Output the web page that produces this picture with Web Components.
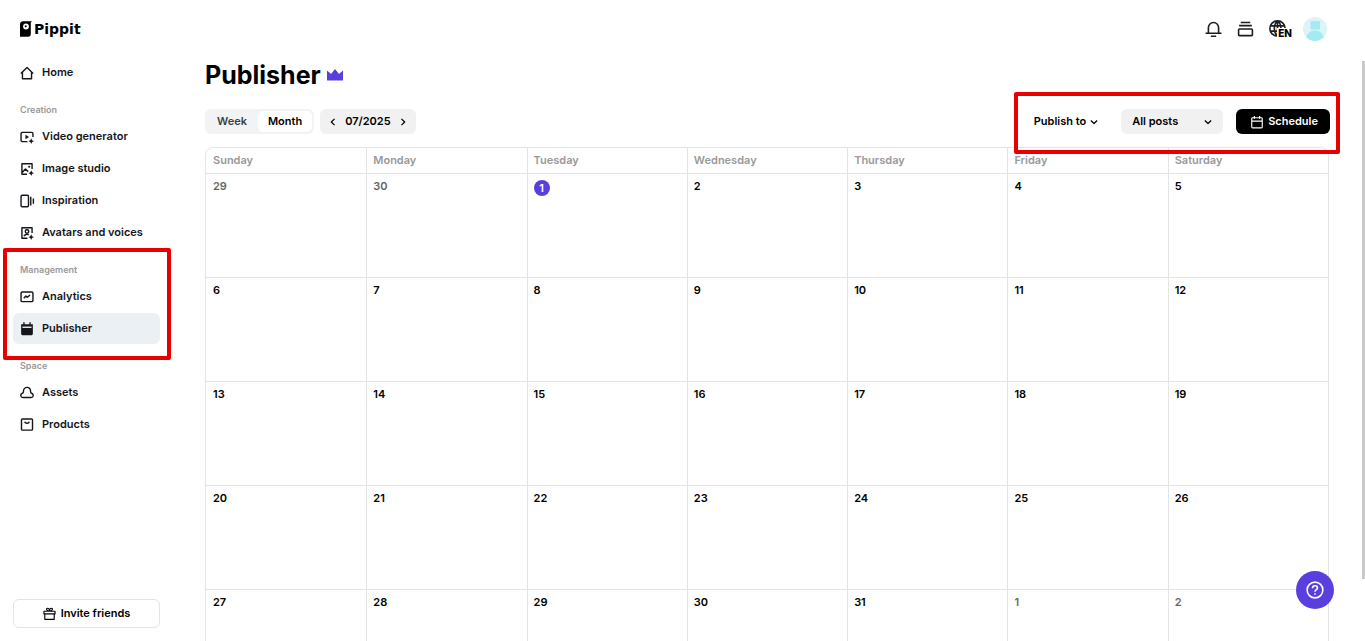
<!DOCTYPE html>
<html lang="en">
<head>
<meta charset="UTF-8">
<meta name="viewport" content="width=device-width, initial-scale=1.0">
<title>Pippit - Publisher</title>
<style>
    :root {
        --text: #14161a;
        --muted: #999;
        --line: #e4e4e4;
        --soft: #f1f1f1;
        --purple: #5b3fde;
        --red: #e60000;
    }
    html, body {
        height: 100%;
        margin: 0;
        overflow: hidden;
    }
    body {
        background: #fff;
        color: var(--text);
        font: 600 11px/16px Inter, "Liberation Sans", sans-serif;
    }
</style>
</head>
<body>
<pippit-app></pippit-app>

<script>
const icons = {
    home: '<path d="M1 8.500 8 1.800l7 6.700M2.800 7v7.500h10.400V7"/>',
    video: '<path d="M8.500 13.300H2.700a1.500 1.500 0 0 1-1.500-1.500V4.200a1.500 1.500 0 0 1 1.500-1.500h10.600a1.500 1.500 0 0 1 1.500 1.500V8"/><path class="fill" d="m6.200 5.500 4.200 2.500-4.200 2.500zM12.800 9.500l1 2.300 2.200 1-2.200 1-1 2.200-1-2.200-2.200-1 2.200-1z"/>',
    image: '<path d="M8 14H2.200V2h11.600v6M2.500 12l3.700-4 3.200 3"/><circle class="fill" cx="10.500" cy="5.500" r="1.200"/><path class="fill" d="m12.800 9.500 1 2.300 2.200 1-2.200 1-1 2.200-1-2.200-2.200-1 2.200-1z"/>',
    inspiration: '<rect x="1.200" y="1.500" width="8.500" height="13" rx="1.300"/><path d="M12.300 3v10M15.300 5v6"/>',
    avatar: '<path d="M8.500 14H2.200V2h11.600v6"/><circle cx="8" cy="6.300" r="2"/><path d="M4.500 11.700c1-2.300 4-2.700 5.500-1.400"/><path class="fill" d="m12.800 9.500 1 2.300 2.200 1-2.200 1-1 2.200-1-2.200-2.200-1 2.200-1z"/>',
    analytics: '<rect x="1.200" y="2.300" width="13.600" height="11" rx="1.300"/><path d="m4.300 9.500 2.400-2.700 1.500 1.600 3.300-2.600"/>',
    calendarFill: '<path class="fill" d="M1.300 2.500h13.400v11a1.500 1.500 0 0 1-1.500 1.500H2.800a1.500 1.500 0 0 1-1.500-1.500z"/><path d="M4.500 .3V3M11.500 .3V3"/><path stroke="#ebf0f4" d="M2.800 6h10.400"/>',
    calendar: '<rect x="2" y="3.200" width="12" height="11.500" rx="1"/><path d="M2 7h12M5 1.200v3M11 1.200v3"/>',
    assets: '<path d="M3.300 13.200c-3 0-3.200-4-.7-4.900 1.100-.4 1.300-.8 1.300-1.800 0-6.500 8.200-6.500 8.200 0 0 1 .2 1.400 1.300 1.800 2.500.9 2.300 4.900-.7 4.900z"/>',
    products: '<rect x="1.700" y="1.200" width="12.600" height="12.600" rx="1"/><path d="M5.300 4.300c.8 2.200 4.600 2.200 5.400 0"/>',
    gift: '<path d="M2.200 8.500v6.700h11.600V8.500M1.200 5.200h13.600v3.300H1.200zM8 5.200C4 5 3.500 1.500 5.700 1.500 7.200 1.500 8 3.500 8 5.200c0-1.700.8-3.700 2.300-3.700C12.500 1.500 12 5 8 5.200"/>',
    bell: '<path d="M3.200 12.500V7.200a4.800 4.800 0 0 1 9.600 0v5.300M.5 12.500h15M5.500 15.300h5"/>',
    stack: '<path d="M3.500 2.300h9M2 5.300h12"/><rect x="1.500" y="8.500" width="13" height="6.200" rx=".8"/>',
    globe: '<path d="M8 15.200A7.200 7.200 0 1 1 15.200 8M8 15.200C4 11.500 4 4.500 8 .8c2.200 1.800 3.300 4.200 3.300 7.200M1.300 5.500h13.400M1.300 10.500H8M8 .8v14.400"/>',
    down: '<path d="m3 5.500 5 5 5-5"/>',
    left: '<path d="M10.500 3 5.300 8l5.200 5"/>',
    right: '<path d="M5.500 3l5.200 5-5.200 5"/>',
    help: '<circle cx="8" cy="8" r="7"/><path d="M5.800 6.400c0-3 4.400-2.800 4.400-.2 0 1.600-2.200 1.500-2.200 3.300M8 10.800v1.400"/>',
    crown: '<path class="fill" stroke="none" d="M0 3.500l4 3.500L8 2l4 5 4-3.500V13.500H0z"/>'
};

class PippitIcon extends HTMLElement {

    constructor() {
        super()
        this.shadow = this.attachShadow({ mode: 'open' })
    }

    connectedCallback() {
        this.shadow.innerHTML =
      /*html*/`
        <style>
            :host {
                display: block;
                flex: none;
                width: var(--icon-size, 16px);
                height: var(--icon-size, 16px);
            }
            svg {
                display: block;
                width: 100%;
                height: 100%;
                overflow: visible;
                fill: none;
                stroke: currentColor;
                stroke-width: var(--icon-stroke, 1.6);
                stroke-linejoin: round;
            }
            .fill {
                fill: currentColor;
                stroke: none;
            }
        </style>
        <svg viewBox="0 0 16 16" aria-hidden="true">${icons[this.getAttribute('name')]}</svg>
      `
    }
}

class PippitHeader extends HTMLElement {

    constructor() {
        super()
        this.shadow = this.attachShadow({ mode: 'open' })
    }

    connectedCallback() {
        this.shadow.innerHTML =
      /*html*/`
        <style>
            :host {
                display: flex;
                justify-content: space-between;
                align-items: center;
                height: 57px;
                padding: 0 38px 0 20px;
            }
            .logo {
                display: flex;
                align-items: center;
                gap: 2px;
                color: #000;
                font: 700 14px/20px "DejaVu Sans", sans-serif;
                text-decoration: none;
            }
            .logo svg {
                width: 12px;
                height: 16px;
            }
            .tools {
                display: flex;
                align-items: center;
                gap: 15px;
            }
            button {
                display: flex;
                padding: 0;
                border: none;
                background: none;
                color: #1c1e24;
                --icon-size: 17px;
                --icon-stroke: 1.5;
            }
            .language {
                position: relative;
                width: 19px;
            }
            .language span {
                position: absolute;
                right: -4px;
                bottom: -1px;
                padding-left: 1px;
                background: #fff;
                color: #000;
                font: 800 10px/10px Inter, sans-serif;
            }
            .avatar svg {
                width: 24px;
                height: 24px;
            }
        </style>
        <a class="logo" href="#">
            <svg viewBox="0 0 12 16" aria-hidden="true">
                <path d="M3 .3h9l-1.200 1.200V13a2.700 2.700 0 0 1-2.700 2.700H0V3.500A3.200 3.200 0 0 1 3 .3z"/>
                <circle cx="6" cy="5.500" r="2.900" fill="#fff"/>
                <circle cx="5.700" cy="5.300" r="1.100"/>
            </svg>
            <span>Pippit</span>
        </a>
        <div class="tools">
            <button aria-label="Notifications"><pippit-icon name="bell"></pippit-icon></button>
            <button aria-label="Tasks"><pippit-icon name="stack"></pippit-icon></button>
            <button class="language" aria-label="Language"><pippit-icon name="globe"></pippit-icon><span>EN</span></button>
            <button class="avatar" aria-label="Account">
                <svg viewBox="0 0 24 24" aria-hidden="true">
                    <circle cx="12" cy="12" r="12" fill="#daf4f7"/>
                    <rect x="7.500" y="4" width="9.500" height="8.500" rx="1" fill="#a3eaf1"/>
                    <path d="M3.300 20.300C4.500 16 8 13.500 12 13.500s7.500 2.500 8.700 6.800A12 12 0 0 1 3.300 20.300z" fill="#a3eaf1"/>
                </svg>
            </button>
        </div>
      `
    }
}

class NavGroup extends HTMLElement {

    constructor() {
        super()
        this.shadow = this.attachShadow({ mode: 'open' })
    }

    connectedCallback() {
        const label = this.getAttribute('label')
        this.shadow.innerHTML =
      /*html*/`
        <style>
            :host {
                display: block;
                position: relative;
            }
            h2 {
                margin: 0;
                padding: 13px 7px 3px;
                color: var(--muted);
                font: 600 9px/16px Inter, sans-serif;
            }
            :host([marked])::after {
                content: "";
                position: absolute;
                inset: -1px -11px -15px -10px;
                border: 4px solid var(--red);
                border-radius: 2px;
                pointer-events: none;
            }
        </style>
        ${label ? `<h2>${label}</h2>` : ''}
        <slot></slot>
      `
    }
}

class NavItem extends HTMLElement {

    constructor() {
        super()
        this.shadow = this.attachShadow({ mode: 'open' })
    }

    connectedCallback() {
        this.shadow.innerHTML =
      /*html*/`
        <style>
            :host {
                display: block;
                padding-bottom: 1px;
            }
            a {
                display: flex;
                align-items: center;
                gap: 8px;
                height: 31px;
                padding: 0 7px;
                border-radius: 6px;
                color: inherit;
                text-decoration: none;
                --icon-size: 14px;
            }
            span {
                padding-bottom: 2px;
            }
            :host([active]) a {
                background: #ebf0f4;
            }
        </style>
        <a href="#"><pippit-icon name="${this.getAttribute('icon')}"></pippit-icon><span><slot></slot></span></a>
      `
    }
}

class PippitSidebar extends HTMLElement {

    constructor() {
        super()
        this.shadow = this.attachShadow({ mode: 'open' })
    }

    connectedCallback() {
        this.shadow.innerHTML =
      /*html*/`
        <style>
            :host {
                display: flex;
                flex-direction: column;
                justify-content: space-between;
                box-sizing: border-box;
                padding: 0 13px;
            }
            .invite {
                display: flex;
                justify-content: center;
                align-items: center;
                gap: 5px;
                width: 100%;
                height: 29px;
                margin-bottom: 13px;
                border: 1px solid var(--line);
                border-radius: 6px;
                background: #fff;
                color: #000;
                font: inherit;
                --icon-size: 13px;
                --icon-stroke: 1.4;
            }
            .invite span {
                padding-bottom: 2px;
            }
        </style>
        <nav>
            <nav-group>
                <nav-item icon="home">Home</nav-item>
            </nav-group>
            <nav-group label="Creation">
                <nav-item icon="video">Video generator</nav-item>
                <nav-item icon="image">Image studio</nav-item>
                <nav-item icon="inspiration">Inspiration</nav-item>
                <nav-item icon="avatar">Avatars and voices</nav-item>
            </nav-group>
            <nav-group label="Management" marked>
                <nav-item icon="analytics">Analytics</nav-item>
                <nav-item icon="calendarFill" active>Publisher</nav-item>
            </nav-group>
            <nav-group label="Space">
                <nav-item icon="assets">Assets</nav-item>
                <nav-item icon="products">Products</nav-item>
            </nav-group>
        </nav>
        <button class="invite"><pippit-icon name="gift"></pippit-icon><span>Invite friends</span></button>
      `
    }
}

class PublisherToolbar extends HTMLElement {

    constructor() {
        super()
        this.shadow = this.attachShadow({ mode: 'open' })
    }

    connectedCallback() {
        this.shadow.innerHTML =
      /*html*/`
        <style>
            :host {
                display: flex;
                justify-content: space-between;
                color: #000;
            }
            div {
                display: flex;
                align-items: center;
            }
            button, select {
                border: none;
                background: none;
                color: inherit;
                font: inherit;
            }
            button {
                display: flex;
                align-items: center;
                padding: 0;
            }
            span {
                padding-bottom: 2px;
            }
            .view {
                gap: 6px;
            }
            .tabs, .month {
                box-sizing: border-box;
                height: 25px;
                border-radius: 6px;
                background: var(--soft);
            }
            .tabs {
                gap: 1px;
                padding: 2px;
                background: #f1f3f5;
            }
            .tabs button {
                height: 21px;
                padding: 0 10px;
                border-radius: 5px;
                color: #3c3f45;
            }
            .tabs .active {
                background: #fff;
                color: #000;
            }
            .month {
                gap: 7px;
                padding: 0 8px;
                --icon-size: 10px;
                --icon-stroke: 2;
            }
            .actions {
                position: relative;
                gap: 13px;
                --icon-size: 10px;
                --icon-stroke: 2;
            }
            .actions::after {
                content: "";
                position: absolute;
                inset: -17px -10px -20px -20px;
                border: 4px solid var(--red);
                border-radius: 2px;
                pointer-events: none;
            }
            .publish {
                gap: 3px;
                margin-right: 9px;
            }
            .filter {
                position: relative;
            }
            .filter pippit-icon {
                position: absolute;
                right: 10px;
                pointer-events: none;
            }
            select {
                appearance: none;
                width: 102px;
                height: 25px;
                padding: 0 11px 2px;
                border-radius: 6px;
                background: var(--soft);
            }
            .schedule {
                gap: 4px;
                height: 25px;
                padding: 0 12px 0 14px;
                border-radius: 6px;
                background: #000;
                color: #fff;
                --icon-size: 14px;
                --icon-stroke: 1.3;
            }
        </style>
        <div class="view">
            <div class="tabs">
                <button><span>Week</span></button>
                <button class="active"><span>Month</span></button>
            </div>
            <div class="month">
                <button aria-label="Previous month"><pippit-icon name="left"></pippit-icon></button>
                <span>07/2025</span>
                <button aria-label="Next month"><pippit-icon name="right"></pippit-icon></button>
            </div>
        </div>
        <div class="actions">
            <button class="publish"><span>Publish to</span><pippit-icon name="down"></pippit-icon></button>
            <div class="filter">
                <select aria-label="Filter posts">
                    <option>All posts</option>
                </select>
                <pippit-icon name="down"></pippit-icon>
            </div>
            <button class="schedule"><pippit-icon name="calendar"></pippit-icon><span>Schedule</span></button>
        </div>
      `
    }
}

class MonthCalendar extends HTMLElement {

    constructor() {
        super()
        this.shadow = this.attachShadow({ mode: 'open' })
    }

    connectedCallback() {
        this.year = Number(this.getAttribute('year'))
        this.month = Number(this.getAttribute('month'))
        this.render()
    }

    getRows() {
        const offset = new Date(this.year, this.month - 1, 1).getDay()
        const today = Number(this.getAttribute('today'))
        let rows = ''
        for (let week = 0; week < 5; week++) {
            rows += '<tr>'
            for (let day = 0; day < 7; day++) {
                const date = new Date(this.year, this.month - 1, week * 7 + day + 1 - offset)
                const outside = date.getMonth() !== this.month - 1
                const state = outside ? 'outside' : date.getDate() === today ? 'today' : ''
                rows += `<td><span class="${state}">${date.getDate()}</span></td>`
            }
            rows += '</tr>'
        }
        return rows
    }

    render() {
        const days = ['Sunday', 'Monday', 'Tuesday', 'Wednesday', 'Thursday', 'Friday', 'Saturday']
        this.shadow.innerHTML =
      /*html*/`
        <style>
            :host {
                display: block;
                border: 1px solid var(--line);
                border-radius: 8px 8px 0 0;
            }
            table {
                width: 100%;
                table-layout: fixed;
                border-spacing: 0;
            }
            th, td {
                box-sizing: border-box;
                padding: 4px 6px;
                border-left: 1px solid var(--line);
                text-align: left;
                vertical-align: top;
            }
            th:first-child, td:first-child {
                padding-left: 7px;
                border-left: none;
            }
            th {
                height: 25px;
                color: var(--muted);
                font-weight: 600;
            }
            td {
                height: 104px;
                border-top: 1px solid var(--line);
                color: #000;
            }
            span {
                display: block;
            }
            .outside {
                color: #666;
            }
            .today {
                width: 16px;
                margin-top: 2px;
                border-radius: 50%;
                background: var(--purple);
                color: #fff;
                text-align: center;
            }
        </style>
        <table>
            <thead><tr>${days.map(day => `<th scope="col">${day}</th>`).join('')}</tr></thead>
            <tbody>${this.getRows()}</tbody>
        </table>
      `
    }
}

class PippitApp extends HTMLElement {

    constructor() {
        super()
        this.shadow = this.attachShadow({ mode: 'open' })
    }

    connectedCallback() {
        this.shadow.innerHTML =
      /*html*/`
        <style>
            :host {
                display: grid;
                grid-template: auto minmax(0, 1fr) / 173px minmax(0, 1fr);
                height: 100vh;
                overflow: hidden;
            }
            pippit-header {
                grid-column: 1 / -1;
            }
            main {
                padding: 2px 35px 0 32px;
            }
            h1 {
                display: flex;
                align-items: center;
                gap: 6px;
                margin: 0 0 18px;
                color: #000;
                font: 700 25px/32px Inter, sans-serif;
            }
            h1 pippit-icon {
                color: var(--purple);
            }
            publisher-toolbar {
                margin-bottom: 13px;
            }
            month-calendar {
                margin-right: 1px;
            }
            .thumb {
                position: absolute;
                top: 61px;
                right: 0;
                bottom: 62px;
                width: 3px;
                background: #c9c9c9;
            }
            .help {
                position: absolute;
                right: 31px;
                bottom: 32px;
                display: grid;
                place-items: center;
                width: 38px;
                height: 38px;
                padding: 0;
                border: none;
                border-radius: 50%;
                background: var(--purple);
                color: #fff;
                --icon-size: 18px;
                --icon-stroke: 1.4;
            }
        </style>
        <pippit-header></pippit-header>
        <pippit-sidebar></pippit-sidebar>
        <main>
            <h1>Publisher <pippit-icon name="crown"></pippit-icon></h1>
            <publisher-toolbar></publisher-toolbar>
            <month-calendar year="2025" month="7" today="1"></month-calendar>
        </main>
        <div class="thumb"></div>
        <button class="help" aria-label="Help"><pippit-icon name="help"></pippit-icon></button>
      `
    }
}

customElements.define('pippit-icon', PippitIcon);
customElements.define('pippit-header', PippitHeader);
customElements.define('nav-group', NavGroup);
customElements.define('nav-item', NavItem);
customElements.define('pippit-sidebar', PippitSidebar);
customElements.define('publisher-toolbar', PublisherToolbar);
customElements.define('month-calendar', MonthCalendar);
customElements.define('pippit-app', PippitApp);
</script>
</body>
</html>
